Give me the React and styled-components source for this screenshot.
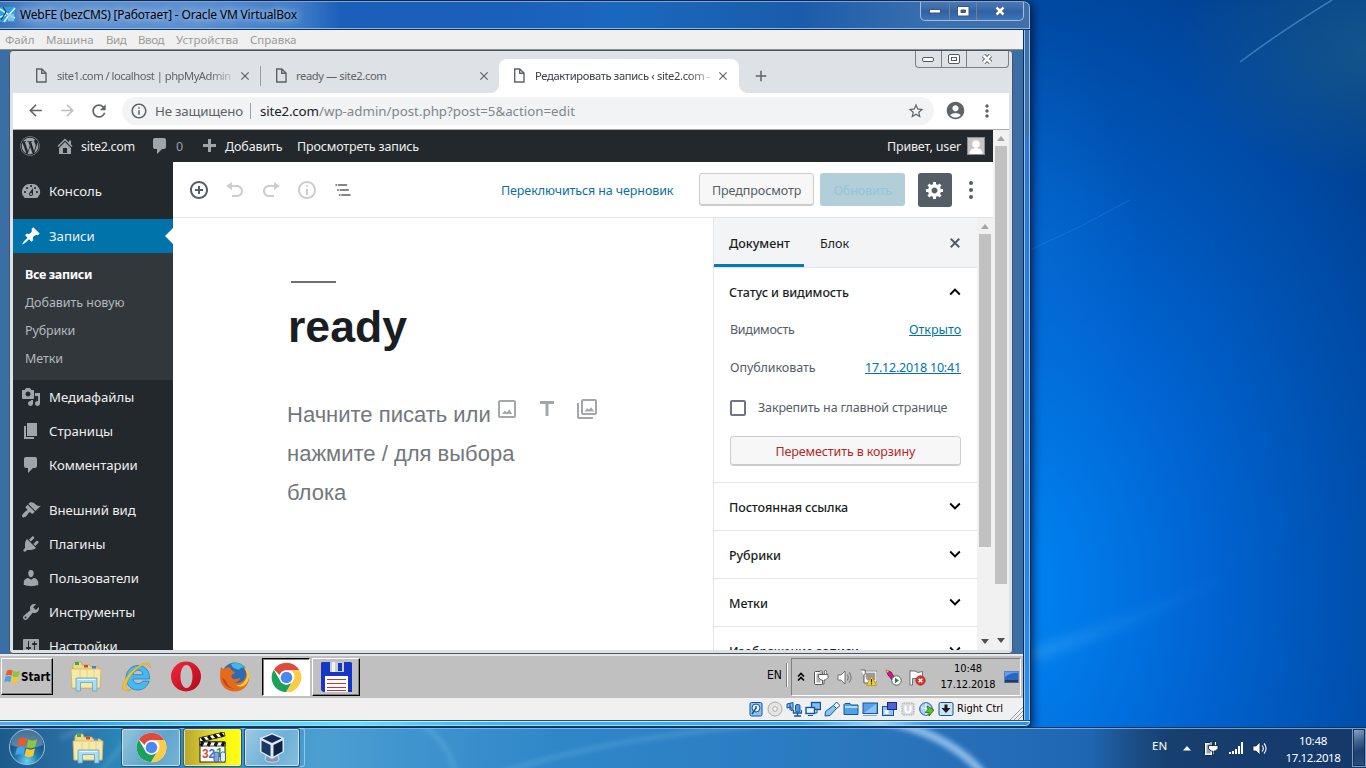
import React from "react";
import styled, { createGlobalStyle, css } from "styled-components";
import {
  MdArrowBack, MdArrowForward, MdRefresh, MdInfoOutline, MdStarBorder, MdAccountCircle,
  MdMoreVert, MdKeyboardArrowUp, MdKeyboardArrowDown, MdClose, MdAdd, MdTitle,
} from "react-icons/md";
import { FaWordpress } from "react-icons/fa";

const Globals = createGlobalStyle`
  html, body { margin: 0; padding: 0; }
  body { width: 1366px; height: 768px; overflow: hidden; background: #0058c0; }
  * { box-sizing: border-box; }
  svg { display: block; flex: none; }
`;

const ui = `"Noto Sans", "Open Sans", sans-serif`;
const tahoma = `"DejaVu Sans Condensed", "Noto Sans", sans-serif`;

const Text = styled.span`
  flex: none;
  width: ${(p) => (p.$w ? `${p.$w}px` : "auto")};
  margin-left: ${(p) => p.$gap || 0}px;
  letter-spacing: ${(p) => p.$ls || 0}px;
  font-family: ${ui};
  white-space: pre;
`;

/* ---------- desktop ---------- */
const Desktop = styled.div`
  position: relative;
  display: flex;
  flex-direction: column;
  width: 1366px;
  height: 768px;
  overflow: hidden;
  background:
    radial-gradient(ellipse 190px 130px at 1366px 50px, rgba(40, 105, 140, 0.5), transparent),
    radial-gradient(ellipse 110px 240px at 1030px 260px, rgba(10, 120, 220, 0.35), transparent),
    radial-gradient(ellipse 520px 720px at 990px 590px, #0088f6 0%, #007ae8 18%, #0064d2 42%, #0053b4 66%, #00459b 88%, #003f8b 100%);
`;
const Wallpaper = styled.svg`
  position: absolute;
  left: 0;
  top: 0;
`;

/* ---------- outer window ---------- */
const VmWindow = styled.div`
  position: relative;
  display: flex;
  flex-direction: column;
  width: 1030px;
  height: 727px;
  border-radius: 0 7px 5px 0;
  box-shadow: 1px 1px 0 #10264a, 3px 3px 10px rgba(0, 10, 50, 0.75);
  background: linear-gradient(#3f71ab 0 136px, #2c78cc 137px, #2b86e2 600px, #2f8fe8 100%);
`;
const TitleBar = styled.div`
  display: flex;
  align-items: center;
  height: 30px;
  border-top: 1px solid #10264f;
  border-bottom: 1px solid #12305c;
  border-radius: 0 7px 0 0;
  box-shadow: inset 0 1px 0 #7fa5d6, inset 0 -1px 0 #86b8ea, inset -1px 0 0 #9dbbe0;
  background: linear-gradient(90deg, #3a70b8 0, #5d8fce 40px, #5c8fd0 200px, #3f7cc8 300px, #1c5fba 340px, #1a5fb8 500px, #1a68bd 620px, #1a5cab 800px, #3a6fae 930px, #416fa8 100%);
`;
const TitleText = styled(Text)`
  font-size: 12px;
  line-height: 28px;
  color: #000;
  text-shadow: 0 0 6px #b9d3f2, 0 0 10px #a5c6ee;
`;
const CaptionButtons = styled.div`
  display: flex;
  align-self: flex-start;
  margin: 1px 6px 0 auto;
  height: 19px;
  border: 1px solid #9fbde2;
  border-top: 0;
  border-radius: 0 0 5px 5px;
  background: linear-gradient(#4a78b4, #3767a8 45%, #2f60a4 50%, #3f74b6);
`;
const CaptionButton = styled.div`
  display: flex;
  align-items: center;
  justify-content: center;
  width: ${(p) => p.$w}px;
  & + & { border-left: 1px solid ${(p) => (p.$flat ? "#7c8086" : "#a3bfe2")}; }
`;
const WindowBody = styled.div`
  display: flex;
  flex: none;
  height: 690px;
`;
const RightFrame = styled.div`
  width: 7px;
  border-left: 1px solid #0e2a55;
  border-right: 1px solid rgba(160, 205, 250, 0.85);
  box-shadow: inset 1px 0 0 rgba(165, 210, 250, 0.85);
`;
const BottomFrame = styled.div`
  height: 7px;
  border-top: 1px solid #1c5488;
  border-bottom: 1px solid #173a66;
  border-radius: 0 0 5px 0;
  box-shadow: inset 0 1px 0 #c9ecfa, inset 0 -1px 0 #a6d8f5, inset -1px 0 0 #8fc4f2;
  background: linear-gradient(90deg, #58a8ea 0, #2aa4f0 80px, #55d6fa 220px, #5fe0fb 360px, #45b5f5 480px, #3aa6f0 800px, #9cd2f6 880px, #3a97ea 930px, #2f8fe8 100%);
`;
const Client = styled.div`
  display: flex;
  flex-direction: column;
  width: 1023px;
`;
const MenuBar = styled.div`
  display: flex;
  height: 20px;
  padding-left: 5px;
  background: #f0f0f0;
  border-bottom: 1px solid #8b8b8b;
`;
const MenuItem = styled(Text)`
  font-size: 11.5px;
  line-height: 19px;
  color: #9b9b9b;
`;
const Guest = styled.div`
  display: flex;
  flex-direction: column;
  height: 648px;
  background: #3b6ea5;
`;
const StatusBar = styled.div`
  display: flex;
  align-items: center;
  gap: 3px;
  height: 22px;
  padding-left: 748px;
  background: #f0f0f0;
`;
const StatusText = styled(Text)`
  font-family: ${tahoma};
  font-size: 11px;
  line-height: 22px;
  color: #000;
`;
const Grip = styled.svg`
  margin: 8px 0 0 auto;
`;

/* ---------- browser ---------- */
const Browser = styled.div`
  display: flex;
  flex-direction: column;
  width: 1004px;
  height: 604px;
  margin-left: 9px;
  padding: 0 3px 3px;
  border: 1px solid #45566b;
  border-radius: 4px;
  background: #dee1e6;
`;
const TabStrip = styled.div`
  display: flex;
  height: 42px;
  padding-left: 21px;
`;
const Tab = styled.div`
  display: flex;
  align-items: center;
  width: ${(p) => p.$w}px;
  height: ${(p) => (p.$active ? 34 : 33)}px;
  margin-top: 8px;
  padding-left: ${(p) => p.$pad}px;
  ${(p) => p.$active && css`
    position: relative;
    padding-bottom: 1px;
    background: #fff;
    border-radius: 8px 8px 0 0;
    &::before, &::after {
      content: "";
      position: absolute;
      bottom: 0;
      width: 8px;
      height: 8px;
    }
    &::before { left: -8px; background: radial-gradient(circle at 0 0, transparent 7.5px, #fff 8px); }
    &::after { right: -8px; background: radial-gradient(circle at 100% 0, transparent 7.5px, #fff 8px); }
  `}
`;
const TabTitle = styled(Text)`
  font-size: 11.2px;
  line-height: 33px;
  color: ${(p) => (p.$active ? "#3c4043" : "#5f6368")};
  ${(p) => p.$fade && css`mask-image: linear-gradient(90deg, #000 calc(100% - 22px), rgba(0, 0, 0, 0.25));`}
`;
const TabClose = styled(MdClose)`
  margin-left: ${(p) => p.$ml}px;
`;
const TabDivider = styled.div`
  width: 1px;
  height: 20px;
  margin-top: 15px;
  background: #9a9da2;
`;
const NewTab = styled(MdAdd)`
  margin: 16px 0 0 13px;
`;
const GuestCaption = styled.div`
  display: flex;
  margin: 0 0 0 auto;
  height: 17px;
  width: 94px;
  border: 1px solid #7c8086;
  border-top: 0;
  border-radius: 0 0 4px 4px;
`;
const AddressBar = styled.div`
  display: flex;
  align-items: center;
  height: 37px;
  padding-left: 13px;
  background: #fff;
  border-bottom: 1px solid #a9abad;
  color: #5f6368;
`;
const NavIcon = styled.div`
  display: flex;
  justify-content: center;
  width: 18px;
  margin-right: 14px;
  color: ${(p) => (p.$off ? "#bcbec0" : "#5f6368")};
`;
const Omnibox = styled.div`
  display: flex;
  align-items: center;
  width: 812px;
  height: 28px;
  padding: 0 8px;
  border-radius: 14px;
  background: #f1f3f4;
`;
const OmniText = styled(Text)`
  font-size: 13.3px;
  line-height: 26px;
  color: ${(p) => p.$c};
`;
const OmniDivider = styled.div`
  width: 1px;
  height: 16px;
  margin: 0 9px 0 7px;
  background: #9aa0a6;
`;
const Viewport = styled.div`
  display: flex;
  height: 521px;
  overflow: hidden;
`;
const ScrollTrack = styled.div`
  display: flex;
  flex-direction: column;
  align-items: center;
  width: 16px;
  background: #f1f1f1;
`;
const ScrollThumb = styled.div`
  width: 12px;
  height: ${(p) => p.$h}px;
  background: #c1c1c1;
`;
const ScrollArrow = styled.div`
  width: 0;
  height: 0;
  border: 4px solid transparent;
  ${(p) => (p.$down
    ? css`margin: auto 0 7px; border-top: 5px solid #505050; border-bottom: 0;`
    : css`margin: 6px 0 5px; border-bottom: 5px solid #a3a3a3; border-top: 0;`)}
`;

/* ---------- wordpress ---------- */
const Page = styled.div`
  display: flex;
  flex-direction: column;
  width: 980px;
  background: #fff;
`;
const AdminBar = styled.div`
  display: flex;
  align-items: center;
  height: 32px;
  flex: none;
  padding-left: 7px;
  background: #23282d;
  color: #a0a5aa;
`;
const BarText = styled(Text)`
  padding-top: 2px;
  font-size: 12.5px;
  line-height: 30px;
  color: ${(p) => p.$c || "#eee"};
`;
const Avatar = styled.div`
  width: 18px;
  height: 18px;
  margin-left: 6px;
  border: 1px solid #8c8f94;
  background: #c5c5c5;
  overflow: hidden;
`;
const IconSlot = styled.div`
  display: flex;
  align-items: center;
  justify-content: center;
  width: ${(p) => p.$w || 20}px;
  margin-left: ${(p) => p.$gap || 0}px;
`;
const Columns = styled.div`
  display: flex;
  height: 489px;
`;
const SideMenu = styled.nav`
  width: 160px;
  flex: none;
  padding-top: 12px;
  background: #23282d;
  overflow: hidden;
`;
const SideItem = styled.div`
  position: relative;
  display: flex;
  align-items: center;
  height: 34px;
  margin-top: ${(p) => p.$mt || 0}px;
  padding-left: 8px;
  color: ${(p) => (p.$current ? "#fff" : "#a0a5aa")};
  background: ${(p) => (p.$current ? "#0073aa" : "transparent")};
  ${(p) => p.$current && css`
    &::after {
      content: "";
      position: absolute;
      right: 0;
      top: 9px;
      border: 8px solid transparent;
      border-left: 0;
      border-right-color: #fff;
    }
  `}
`;
const SideText = styled(Text)`
  font-size: 13.2px;
  line-height: 34px;
  color: #eee;
`;
const SubMenu = styled.div`
  display: flex;
  flex-direction: column;
  height: 127px;
  padding: 8px 0 0 12px;
  background: #32373c;
`;
const SubItem = styled(Text)`
  font-size: 12.5px;
  line-height: 28px;
  font-weight: ${(p) => (p.$on ? 700 : 400)};
  color: ${(p) => (p.$on ? "#fff" : "#b4b9be")};
`;
const Editor = styled.div`
  display: flex;
  flex-direction: column;
  width: 820px;
`;
const EditorToolbar = styled.div`
  display: flex;
  align-items: center;
  height: 56px;
  flex: none;
  padding: 1px 0 0 16px;
  border-bottom: 1px solid #e2e4e7;
`;
const ToolIcon = styled.div`
  display: flex;
  width: 20px;
  margin-right: 16px;
  color: ${(p) => (p.$off ? "#cbcdce" : "#555d66")};
`;
const DraftLink = styled(Text)`
  padding-top: 2px;
  font-size: 12.5px;
  line-height: 50px;
  color: #0b6f9f;
`;
const Button = styled.div`
  display: flex;
  justify-content: center;
  width: ${(p) => p.$w}px;
  height: 33px;
  border-radius: 3px;
  ${(p) => (p.$primary
    ? css`margin-left: 6px; background: #b2ced9;`
    : css`margin-left: 25px; background: #f7f7f7; border: 1px solid #ccc; box-shadow: inset 0 -1px 0 #ccc;`)}
`;
const ButtonText = styled(Text)`
  font-size: 12.5px;
  line-height: ${(p) => (p.$primary ? 35 : 33)}px;
  color: ${(p) => (p.$primary ? "#93c5d9" : "#555d66")};
`;
const GearButton = styled.div`
  display: flex;
  align-items: center;
  justify-content: center;
  width: 34px;
  height: 34px;
  margin-left: 13px;
  border-radius: 3px;
  background: #555d66;
  color: #fff;
`;
const Workspace = styled.div`
  display: flex;
  height: 433px;
`;
const Canvas = styled.div`
  width: 540px;
  padding: 63px 0 0 114px;
`;
const TitleRule = styled.div`
  width: 45px;
  height: 2px;
  margin-left: 4px;
  background: #6f6f70;
`;
const PostTitle = styled.h1`
  margin: 17px 0 0 1px;
  font: 700 44.6px/54px "Liberation Sans", Arial, sans-serif;
  color: #191e23;
`;
const Prompt = styled.div`
  display: flex;
  margin-top: 41px;
`;
const PromptText = styled.p`
  width: 208px;
  margin: 0;
  white-space: pre;
  font: 22px/39px "Liberation Sans", Arial, sans-serif;
  color: #72777c;
`;
const BlockHints = styled.div`
  display: flex;
  gap: 16px;
  padding-top: 2px;
  color: #a3a7ab;
`;
const Inspector = styled.aside`
  width: 264px;
  border-left: 1px solid #e2e4e7;
  overflow: hidden;
`;
const InspectorTabs = styled.div`
  display: flex;
  height: 50px;
  background: #f3f4f5;
  border-bottom: 1px solid #e2e4e7;
`;
const InspectorTab = styled.div`
  width: 90px;
  height: 49px;
  padding-left: ${(p) => (p.$on ? 15 : 16)}px;
  ${(p) => p.$on && css`box-shadow: inset 0 -3px 0 #007cba;`}
`;
const PanelText = styled(Text)`
  display: block;
  padding-top: ${(p) => p.$drop || 0}px;
  font-size: 12.5px;
  line-height: ${(p) => p.$lh || 20}px;
  font-weight: ${(p) => (p.$strong ? 500 : 400)};
  color: ${(p) => p.$c || "#191e23"};
  text-decoration: ${(p) => (p.$link ? "underline" : "none")};
`;
const InspectorClose = styled.div`
  margin: 15px 0 0 51px;
  color: #555d66;
`;
const StatusPanel = styled.section`
  height: 215px;
  border-bottom: 1px solid #e2e4e7;
`;
const PanelHead = styled.div`
  display: flex;
  align-items: center;
  justify-content: space-between;
  height: ${(p) => p.$h}px;
  padding: 0 11px 0 15px;
  ${(p) => p.$line && css`border-bottom: 1px solid #e2e4e7;`}
`;
const PanelRow = styled.div`
  display: flex;
  align-items: center;
  justify-content: space-between;
  height: ${(p) => p.$h}px;
  padding: 2px 16px 0;
`;
const StickyRow = styled.div`
  display: flex;
  align-items: center;
  height: 30px;
  padding-left: 16px;
`;
const Checkbox = styled.div`
  width: 16px;
  height: 16px;
  margin-right: 12px;
  border: 2px solid #6c7781;
  border-radius: 2px;
`;
const TrashButton = styled.div`
  display: flex;
  justify-content: center;
  width: 231px;
  height: 30px;
  margin: 13px 0 0 16px;
  border: 1px solid #ccc;
  border-radius: 3px;
  box-shadow: inset 0 -1px 0 #ccc;
  background: #f7f7f7;
`;

/* ---------- guest task bar ---------- */
const GuestTaskbar = styled.div`
  display: flex;
  height: 44px;
  margin-top: auto;
  padding: 4px 2px 0 1px;
  border-top: 2px solid #e8e8e8;
  background: #c0c0c0;
`;
const raised = css`
  border: 1px solid;
  border-color: #fff #000 #000 #fff;
  box-shadow: inset -1px -1px 0 #808080;
`;
const StartButton = styled.div`
  display: flex;
  align-items: center;
  width: 52px;
  height: 37px;
  padding-left: 2px;
  margin-top: -2px;
  ${raised}
`;
const StartText = styled(Text)`
  font: 700 11.5px/34px "DejaVu Sans Condensed", sans-serif;
  color: #000;
`;
const Launchers = styled.div`
  display: flex;
  align-items: center;
  gap: 18px;
  height: 37px;
  margin: -2px 0 0 17px;
`;
const TaskButton = styled.div`
  display: flex;
  align-items: center;
  justify-content: center;
  width: 48px;
  height: 38px;
  margin: -2px 0 0 ${(p) => p.$gap}px;
  ${(p) => (p.$pressed ? css`border: 1px solid; border-color: #000 #fff #fff #000; box-shadow: inset 1px 1px 0 #808080; background: #fff;` : raised)}
`;
const LangText = styled(Text)`
  font-family: ${tahoma};
  font-size: 12px;
  line-height: 30px;
  color: #000;
`;
const TraySeparator = styled.div`
  width: 2px;
  height: 24px;
  margin: 3px 0 0 4px;
  border-left: 1px solid #808080;
  border-right: 1px solid #fff;
`;
const GuestTray = styled.div`
  display: flex;
  align-items: center;
  width: 230px;
  height: 38px;
  margin: -2px 0 0 3px;
  padding-left: 5px;
  border: 1px solid;
  border-color: #808080 #fff #fff #808080;
`;
const TrayIcons = styled.div`
  display: flex;
  align-items: center;
  gap: 7.5px;
  margin-left: 8px;
`;
const Clock = styled.div`
  display: flex;
  flex-direction: column;
  align-items: center;
  width: 60px;
`;
const ClockText = styled(Text)`
  font-family: ${tahoma};
  font-size: 11px;
  line-height: 16px;
  color: #000;
`;

/* ---------- host task bar ---------- */
const HostTaskbar = styled.div`
  position: relative;
  display: flex;
  height: 41px;
  border-top: 1px solid #10335e;
  box-shadow: inset 0 1px 0 rgba(150, 200, 240, 0.7);
  background: linear-gradient(90deg, #1d5a8c 0, #2a6fa3 70px, #2a87b8 120px, #3a95c8 240px, #4b9fd0 320px, #3f93ce 420px, #2f87c8 560px, #2b7cc2 780px, #2a74bb 900px, #1f66b2 1090px, #1c4f88 1130px, #173f70 1170px, #153a6c 1300px, #15396a 100%);
`;
const Orb = styled.div`
  margin: 0 0 0 8px;
`;
const HostApp = styled.div`
  display: flex;
  align-items: center;
  justify-content: center;
  width: ${(p) => p.$w}px;
  height: 39px;
  margin-left: ${(p) => p.$gap}px;
  border: 1px solid rgba(20, 50, 80, 0.75);
  border-radius: 3px;
  box-shadow: inset 0 0 0 1px rgba(220, 240, 255, 0.75);
  background: ${(p) => (p.$alert
    ? "linear-gradient(90deg, #b9a52c, #d8cf2c 40%, #f6f615 75%, #ffff10)"
    : "linear-gradient(120deg, rgba(255, 255, 255, 0.5), rgba(255, 255, 255, 0.22) 60%, rgba(255, 255, 255, 0.35))")};
`;
const StackEdge = styled.div`
  width: 5px;
  height: 39px;
  border: 1px solid rgba(200, 230, 250, 0.55);
  border-left: 0;
  border-radius: 0 3px 3px 0;
`;
const HostTray = styled.div`
  display: flex;
  align-items: center;
  width: 200px;
  height: 41px;
  margin-left: auto;
`;
const HostText = styled(Text)`
  font-size: 11.5px;
  line-height: 17px;
  color: #fff;
`;
const HostLang = styled(HostText)`
  padding-bottom: 6px;
`;
const ShowDesktop = styled.div`
  width: 14px;
  height: 39px;
  border: 1px solid #7d9cc0;
  box-shadow: inset 0 0 0 1px #17315a;
  background: linear-gradient(160deg, #8fa9c6, #3f628e 35%, #1d3f6f 60%, #2a4f80);
`;

/* ---------- icons ---------- */
const dash = {
  home: "M16 8.5l1.53 1.53-1.06 1.06L10 4.6l-6.47 6.49-1.06-1.06L10 2.5l4 4v-2h2v4zm-6-2.46l6 5.99V18H4v-5.97zM12 17v-5H8v5h4z",
  comments: "M5 2h9c1.1 0 2 .9 2 2v7c0 1.1-.9 2-2 2h-2l-5 5v-5H5c-1.1 0-2-.9-2-2V4c0-1.1.9-2 2-2z",
  plus: "M17 8v3h-5v5H9v-5H4V8h5V3h3v5h5z",
  dashboard: "M3.76 17h12.48A7.998 7.998 0 0 0 10 3a7.998 7.998 0 0 0-6.24 14zM10 4c.55 0 1 .45 1 1s-.45 1-1 1-1-.45-1-1 .45-1 1-1zM6 6c.55 0 1 .45 1 1s-.45 1-1 1-1-.45-1-1 .45-1 1-1zm8 0c.55 0 1 .45 1 1s-.45 1-1 1-1-.45-1-1 .45-1 1-1zm-5.37 5.55L12 7v6c0 1.1-.9 2-2 2s-2-.9-2-2c0-.57.24-1.08.63-1.45zM4 10c.55 0 1 .45 1 1s-.45 1-1 1-1-.45-1-1 .45-1 1-1zm12 0c.55 0 1 .45 1 1s-.45 1-1 1-1-.45-1-1 .45-1 1-1zm-5 3c0-.55-.45-1-1-1s-1 .45-1 1 .45 1 1 1 1-.45 1-1z",
  post: "M10.44 3.02l1.82-1.82 6.36 6.35-1.83 1.82c-1.05-.68-2.48-.57-3.41.36l-.75.75c-.92.93-1.04 2.35-.35 3.41l-1.83 1.82-2.41-2.41-2.8 2.79c-.42.42-3.38 2.71-3.8 2.29s1.86-3.39 2.28-3.81l2.79-2.79L4.1 9.36l1.83-1.82c1.05.69 2.48.57 3.4-.36l.75-.75c.93-.92 1.05-2.35.36-3.41z",
  media: "M13 11V4c0-.55-.45-1-1-1h-1.67L9 1H5L3.67 3H2c-.55 0-1 .45-1 1v7c0 .55.45 1 1 1h10c.55 0 1-.45 1-1zM7 4.5c1.38 0 2.5 1.12 2.5 2.5S8.38 9.5 7 9.5 4.5 8.38 4.5 7 5.62 4.5 7 4.5zM14 6h5v10.5c0 1.38-1.12 2.5-2.5 2.5S14 17.88 14 16.5s1.12-2.5 2.5-2.5c.17 0 .34.02.5.05V9h-3V6zm-4 8.05V13h2v3.5c0 1.38-1.12 2.5-2.5 2.5S7 17.88 7 16.5 8.12 14 9.5 14c.17 0 .34.02.5.05z",
  page: "M6 15V2h10v13H6zm-1 1h8v2H3V5h2v11z",
  appearance: "M14.48 11.06L7.41 3.99l1.5-1.5c.5-.56 2.3-.47 3.51.32 1.21.8 1.43 1.28 2.91 2.1 1.18.64 2.45 1.26 4.45.85zm-.71.71L6.7 4.7 4.93 6.47c-.39.39-.39 1.02 0 1.41l1.06 1.06c.39.39.39 1.03 0 1.42-.6.6-1.43 1.11-2.21 1.69-.35.26-.7.53-1.01.84C1.43 14.23.4 16.08 1.4 17.07c.99 1 2.84-.03 4.18-1.36.31-.31.58-.66.85-1.02.57-.78 1.08-1.61 1.69-2.21.39-.39 1.02-.39 1.41 0l1.06 1.06c.39.39 1.02.39 1.41 0z",
  plugins: "M13.11 4.36L9.87 7.6 8 5.73l3.24-3.24c.35-.34 1.05-.2 1.56.32.52.51.66 1.21.31 1.55zm-8 1.77l.91-1.12 9.01 9.01-1.19.84c-.71.71-2.63 1.16-3.82 1.16H6.14L4.9 17.26c-.59.59-1.54.59-2.12 0-.59-.58-.59-1.53 0-2.12l1.24-1.24v-3.88c0-1.13.4-3.19 1.09-3.89zm7.26 3.97l3.24-3.24c.34-.35 1.04-.21 1.55.31.52.51.66 1.21.31 1.55l-3.24 3.25z",
  users: "M10 9.25c-2.27 0-2.73-3.44-2.73-3.44C7 4.02 7.82 2 9.97 2c2.16 0 2.98 2.02 2.71 3.81 0 0-.41 3.44-2.68 3.44zm0 2.57L12.72 10c2.39 0 4.52 2.33 4.52 4.53v2.49s-3.65 1.13-7.24 1.13c-3.65 0-7.24-1.13-7.24-1.13v-2.49c0-2.25 1.94-4.48 4.47-4.48z",
  tools: "M16.68 9.77c-1.34 1.34-3.3 1.67-4.95.99l-5.41 6.52c-.99.99-2.59.99-3.58 0s-.99-2.59 0-3.57l6.52-5.42c-.68-1.65-.35-3.61.99-4.95 1.28-1.28 3.12-1.62 4.72-1.06l-2.89 2.89 2.82 2.82 2.86-2.87c.53 1.58.18 3.39-1.08 4.65zM3.81 16.21c.4.39 1.04.39 1.43 0 .4-.4.4-1.04 0-1.43-.39-.4-1.03-.4-1.43 0-.39.39-.39 1.03 0 1.43z",
  settings: "M18 16V4c0-.55-.45-1-1-1H3c-.55 0-1 .45-1 1v12c0 .55.45 1 1 1h14c.55 0 1-.45 1-1zM8 11h1c.55 0 1 .45 1 1s-.45 1-1 1H8v1.5c0 .28-.22.5-.5.5s-.5-.22-.5-.5V13H6c-.55 0-1-.45-1-1s.45-1 1-1h1V5.5c0-.28.22-.5.5-.5s.5.22.5.5V11zm5-2h-1c-.55 0-1-.45-1-1s.45-1 1-1h1V5.5c0-.28.22-.5.5-.5s.5.22.5.5V7h1c.55 0 1 .45 1 1s-.45 1-1 1h-1v5.5c0 .28-.22.5-.5.5s-.5-.22-.5-.5V9z",
  gear: "M18 12h-2.18c-.17.7-.44 1.35-.81 1.93l1.54 1.54-2.1 2.1-1.54-1.54c-.58.36-1.23.63-1.91.79V19H8v-2.18c-.68-.16-1.33-.43-1.91-.79l-1.54 1.54-2.12-2.12 1.54-1.54c-.36-.58-.63-1.23-.79-1.91H1V9.03h2.17c.16-.7.44-1.35.8-1.94L2.43 5.55l2.1-2.1 1.54 1.54c.58-.37 1.24-.64 1.93-.81V2h3v2.18c.68.16 1.33.43 1.91.79l1.54-1.54 2.12 2.12-1.54 1.54c.36.59.64 1.24.8 1.94H18V12zm-8.5 1.5c1.66 0 3-1.34 3-3s-1.34-3-3-3-3 1.34-3 3 1.34 3 3 3z",
  close: "M14.95 6.46L11.41 10l3.54 3.54-1.41 1.41L10 11.42l-3.53 3.53-1.42-1.42L8.58 10 5.05 6.47l1.42-1.42L10 8.58l3.54-3.53z",
  insert: "M10 1c-5 0-9 4-9 9s4 9 9 9 9-4 9-9-4-9-9-9zm0 16c-3.9 0-7-3.1-7-7s3.1-7 7-7 7 3.1 7 7-3.1 7-7 7zm1-11H9v3H6v2h3v3h2v-3h3V9h-3V6z",
  undo: "M12 5H7V2L1 6l6 4V7h5c2.2 0 4 1.8 4 4s-1.8 4-4 4H7v2h5c3.3 0 6-2.7 6-6s-2.7-6-6-6z",
  redo: "M8 5h5V2l6 4-6 4V7H8c-2.2 0-4 1.8-4 4s1.8 4 4 4h5v2H8c-3.3 0-6-2.7-6-6s2.7-6 6-6z",
  info: "M9 15h2V9H9v6zm1-10c-.5 0-1 .5-1 1s.5 1 1 1 1-.5 1-1-.5-1-1-1zm0-4c-5 0-9 4-9 9s4 9 9 9 9-4 9-9-4-9-9-9zm0 16c-3.9 0-7-3.1-7-7s3.1-7 7-7 7 3.1 7 7-3.1 7-7 7z",
};
const Dash = ({ name, size = 20 }) => (
  <svg width={size} height={size} viewBox="0 0 20 20" fill="currentColor"><path d={dash[name]} /></svg>
);
const ListIcon = () => (
  <svg width="20" height="20" viewBox="0 0 24 24" fill="currentColor">
    <path d="M5 5H3v2h2V5zm3 8h11v-2H8v2zm9-8H6v2h11V5zM7 11H5v2h2v-2zm0 8h2v-2H7v2zm3-2v2h11v-2H10z" />
  </svg>
);
const FileIcon = () => (
  <svg width="12" height="15" viewBox="0 0 12 15" fill="none" stroke="#5f6368" strokeWidth="1.4">
    <path d="M1.7 1h5L11 5V14H1.7z M6.7 1v4.200H11" />
  </svg>
);
const ImageIcon = () => (
  <svg width="24" height="24" viewBox="0 0 24 24" fill="currentColor">
    <path d="M19 5v14H5V5h14m0-2H5c-1.100 0-2 .9-2 2v14c0 1.100.9 2 2 2h14c1.100 0 2-.9 2-2V5c0-1.100-.9-2-2-2z" />
    <path d="M14.300 12.500l-2.600 3-1.800-2L7 17h10.200z" />
  </svg>
);
const GalleryIcon = () => (
  <svg width="24" height="24" viewBox="0 0 24 24" fill="currentColor">
    <path d="M20 4v12H8V4h12m0-2H8c-1.100 0-2 .9-2 2v12c0 1.100.9 2 2 2h12c1.100 0 2-.9 2-2V4c0-1.100-.9-2-2-2z" />
    <path d="M16.200 10.200l-2.300 2.600-1.600-1.800L9.500 14.500h9.600z M2 6v14c0 1.100.9 2 2 2h14v-2H4V6H2z" />
  </svg>
);
const VmIcon = () => (
  <svg width="16" height="16" viewBox="0 0 16 16">
    <rect x="-2" width="17" height="15" fill="#2b9fe0" />
    <path d="M0 2L9 8 15 1M4 15l5-7 6 3M0 10l6-2" stroke="#d8f2ff" strokeWidth="1.6" fill="none" />
    <path d="M3 0l3 5-5 8" stroke="#12446e" strokeWidth="1.2" fill="none" />
    <rect x="8" y="7" width="6" height="7" fill="#9cc7e6" opacity=".8" />
  </svg>
);
const ChromeIcon = () => (
  <svg width="31" height="31" viewBox="0 0 48 48">
    <circle cx="24" cy="24" r="23" fill="#fff" />
    <path d="M24 1a23 23 0 0 1 20 11.7H24a11.3 11.3 0 0 0-10.6 7.5L4.6 11.5A23 23 0 0 1 24 1z" fill="#de4b3c" />
    <path d="M44 12.7A23 23 0 0 1 23 47l10.400-17.200A11 11 0 0 0 31 13z" fill="#fdcc45" />
    <path d="M4.300 12A23 23 0 0 0 23 47l9.500-16.200a11 11 0 0 1-18.600-2.300z" fill="#1ba15c" />
    <circle cx="24" cy="24" r="11" fill="#fff" />
    <circle cx="24" cy="24" r="9" fill="#4b87f0" />
  </svg>
);
const FolderIcon = () => (
  <svg width="33" height="31" viewBox="0 0 33 31">
    <path d="M3 3l2-2h6l1 3h8l1 2h7l2 2v19H2z" fill="#f0d98a" stroke="#c7a545" strokeWidth=".8" />
    <path d="M1 8h30l-1 19H2z" fill="#f7e9a9" stroke="#d3b55a" strokeWidth=".8" />
    <rect x="5" y="1" width="4" height="3" fill="#35a853" /><rect x="14" y="4" width="4" height="2.5" fill="#d9412f" /><rect x="22" y="5" width="4" height="2.5" fill="#3a86d8" />
    <path d="M10 9v17M17 9v8M24 9v17" stroke="#e6cf80" />
    <path d="M6 17h21v13h-4.500v-8.500h-12V30H6z" fill="#a8dcf5" stroke="#5fa8d2" strokeWidth=".9" opacity=".95" />
    <path d="M7.500 18.500h18" stroke="#e9f9ff" />
  </svg>
);
const IeIcon = () => (
  <svg width="32" height="32" viewBox="0 0 32 32">
    <path fillRule="evenodd" d="M28.500 18H12c.3 3 2.300 4.600 5 4.600 2.200 0 3.700-.9 4.700-2.500h6.500C26.500 25.500 22.300 29 16.900 29 10 29 5 24 5 17 5 10 10.200 4.500 17 4.500c7.200 0 12 5.500 11.500 13.500zM12 13.700h10c-.4-2.700-2.400-4.500-5-4.500-2.600 0-4.500 1.800-5 4.500z" fill="#45b8f0" stroke="#1f7dc0" strokeWidth=".8" />
    <path d="M29.500 7C30 2 25.500.5 19 4 11 8 3.500 17 2 24c-1 5 2.500 7.500 8.500 4.500C6.500 29.500 4 28 5 24 7 17 13 9 20 5.200c4.500-2.400 8-2.200 9.500 1.800z" fill="#f4c531" stroke="#d29b12" strokeWidth=".5" />
  </svg>
);
const OperaIcon = () => (
  <svg width="30" height="31" viewBox="0 0 30 31">
    <defs><linearGradient id="opera" x2="1" y2="1"><stop offset="0" stopColor="#f5263a" /><stop offset="1" stopColor="#b00a1c" /></linearGradient></defs>
    <path fillRule="evenodd" d="M15 .5a15 15 0 1 0 0 30 15 15 0 1 0 0-30zM15.500 4c3.600 0 6 4.900 6 11.500S19.100 27 15.500 27s-6-4.900-6-11.500S11.900 4 15.500 4z" fill="url(#opera)" />
  </svg>
);
const FirefoxIcon = () => (
  <svg width="31" height="31" viewBox="0 0 31 31">
    <circle cx="16" cy="14.500" r="13" fill="#2a6cb5" />
    <path d="M12 3c5-2 11-1 14 4-3-1-5 0-6 2-3-1-7-2-8-6z" fill="#46b6e6" />
    <path d="M2 6c1 1 2 1.500 3 2 2-1.500 4-2 6-1.500 1 1 1 2.500 3 3.500 1 .6 2 .8 2 1.600-.5 1.300-3 1.500-3.500 3-.4 1.500.5 3 2.500 3.500 2.500.5 4-1.500 6.500-.8-1 2.700-3.500 4-6.500 4 6 2 11-1 12-7 .3-2.500-.5-5-1.500-6.500 3 2.200 5 5.500 4.700 9.500C29.500 25 23.500 30.500 16 30.500 7.500 30.500 1 24.500 1 15.500 1 12 1.300 9 2 6z" fill="#e66a1c" />
    <path d="M25.500 8c3.500 4 3 9.500-.5 13-2 2.300-5 3.500-8 3.300 5 3.500 12 0 13-8 .5-3.500-1-7.500-4.500-10.300z" fill="#fbc93a" />
    <path d="M3 16c1 7 6 12 13 12-5-1-8-4-9-8z" fill="#c8401a" />
  </svg>
);
const FloppyIcon = () => (
  <svg width="31" height="31" viewBox="0 0 31 31">
    <path d="M1 0h29l1 1v29H2l-2-2V1z" fill="#1637c4" />
    <path d="M9 0h14v10H9z" fill="#c9ccd2" /><path d="M17 1h4v8h-4z" fill="#1637c4" /><path d="M11 0h3v10h-3z" fill="#f4f4f4" />
    <path d="M4 14h23v16H4z" fill="#fff" />
    <path d="M6 17.500h19M6 21.500h19M6 25.500h19M6 28.500h19" stroke="#c8323a" />
  </svg>
);
const flagParts = [
  ["#ea5a2a", "M2.3 2.300C4 1.300 6 1.300 7.700 2.300L6.600 7.300C5 6.300 3 6.300 1.100 7.300z"],
  ["#8cc63e", "M8.500 2.700c1.900 1 3.900 1 5.900 0l-1.200 5c-1.900 1-3.900 1-5.800 0z"],
  ["#45a3e8", "M.9 8.300c1.800-1 3.700-1 5.500 0l-1.100 5c-1.800-1-3.700-1-5.600 0z"],
  ["#fbc52e", "M7.200 8.700c1.900 1 3.900 1 5.800 0l-1.200 5c-1.900 1-3.900 1-5.700 0z"],
];
const WinFlag = ({ size }) => (
  <svg width={size} height={size} viewBox="-.5 0 16 16">{flagParts.map(([c, d]) => <path key={c} d={d} fill={c} />)}</svg>
);
const OrbIcon = () => (
  <svg width="38" height="38" viewBox="0 0 38 38">
    <defs><radialGradient id="orb" cx=".5" cy=".9" r=".85"><stop offset="0" stopColor="#5fd5f7" /><stop offset=".4" stopColor="#2272a8" /><stop offset="1" stopColor="#123a62" /></radialGradient></defs>
    <circle cx="19" cy="19" r="17.500" fill="url(#orb)" stroke="#9cc4de" strokeWidth="1" />
    <path d="M3 17a16 16 0 0 1 32 0c-9 4-23 4-32 0z" fill="#bcd9ec" opacity=".35" />
    <g transform="translate(7.500 7.500) scale(1.500)">{flagParts.map(([c, d]) => <path key={c} d={d} fill={c} />)}</g>
  </svg>
);
const ClapperText = styled.text`
  font: 700 12px "Liberation Sans", sans-serif;
`;
const ClapperIcon = () => (
  <svg width="32" height="32" viewBox="0 0 32 32">
    <path d="M2 6L27 0l1 4L3 10z" fill="#fff" stroke="#111" strokeWidth=".8" />
    <path d="M5 5.500l3 3.500M11 4l3 3.500M17 2.500l3 3.500M23 1l3 3.500" stroke="#111" strokeWidth="3" />
    <rect x="3" y="10" width="25" height="20" fill="#fff" stroke="#222" />
    <path d="M3 10h25v4H3z" fill="#fff" stroke="#111" strokeWidth=".8" />
    <path d="M6 10l-2 4M13 10l-2 4M20 10l-2 4M27 10l-2 4" stroke="#111" strokeWidth="3" />
    <ClapperText x="5" y="26" fill="#d4502c">3</ClapperText><ClapperText x="11.500" y="26" fill="#3a6fd0">2</ClapperText><ClapperText x="19" y="25" fill="#2c9a3e">1</ClapperText>
    <rect x="17" y="20" width="5" height="10" rx="2" fill="#7fa6e0" stroke="#2b4c96" strokeWidth=".8" /><rect x="23.500" y="20" width="5" height="10" rx="2" fill="#e4ecf9" stroke="#2b4c96" strokeWidth=".8" />
  </svg>
);
const VboxIcon = () => (
  <svg width="28" height="32" viewBox="0 0 28 32">
    <path d="M8 23l6 3 6-3 1 5c-2 3-12 3-14 0z" fill="#8a97ad" stroke="#d8e4f2" strokeWidth=".8" />
    <path d="M14 1l12 5v14l-12 7L2 20V6z" fill="#dbe7f5" />
    <path d="M14 2.500l9.500 4L14 11 4.500 6.500z" fill="#132d52" /><path d="M3.500 8.500l9 4.500v11.500l-9-5z" fill="#1a3a66" /><path d="M24.500 8.500l-9 4.500v11.500l9-5z" fill="#0d2344" />
  </svg>
);
const Speaker = ({ edge, wave = "#fff" }) => (
  <svg width="16" height="15" viewBox="0 0 16 15">
    <path d="M1 5h3l4-4v13L4 10H1z" fill="#fff" stroke={edge} strokeWidth=".8" />
    <path d="M10 4.500a4.500 4.500 0 0 1 0 6M12 2.500a7 7 0 0 1 0 10" fill="none" stroke={wave} strokeWidth="1.100" />
  </svg>
);
const PlugIcon = ({ edge }) => (
  <svg width="16" height="17" viewBox="0 0 16 17">
    <rect x="1.500" y="2.500" width="8" height="13" rx="1" fill="#fff" stroke={edge} />
    <rect x="3.500" y="4.500" width="4" height="9" fill={edge} opacity=".45" />
    <path d="M8 1.500v4M12.500 1.500v4" stroke={edge} strokeWidth="2.400" /><path d="M8 2v4M12.500 2v4" stroke="#fff" strokeWidth="1.200" />
    <path d="M5.500 5.500h9.500v3l-2.500 2.500h-1.500v4H9.500v-4H8L5.500 8.500z" fill="#fff" stroke={edge} strokeWidth=".9" />
  </svg>
);
const NetIcon = () => (
  <svg width="17" height="17" viewBox="0 0 17 17">
    <rect x="5" y="3" width="11" height="9" fill="#8e8e8e" stroke="#555" strokeWidth="2.400" /><rect x="5" y="3" width="11" height="9" fill="#9a9a9a" stroke="#fff" strokeWidth="1.300" />
    <path d="M.8 1h4.400v4L4 6.500V14h5" fill="#fff" stroke="#555" strokeWidth=".9" />
    <path d="M11.500 7l5 9.500h-10z" fill="#f7d51d" stroke="#a88500" strokeWidth=".6" /><path d="M11.500 10v3.500M11.500 14.300v1.200" stroke="#222" strokeWidth="1.200" />
  </svg>
);
const RocketIcon = () => (
  <svg width="17" height="17" viewBox="0 0 17 17">
    <path d="M1 1l5 2 5 8-3 1-5-6z" fill="#d9148b" stroke="#62113f" strokeWidth=".8" /><path d="M1 1l3 1-2 2z" fill="#f5d824" />
    <circle cx="11.500" cy="11.500" r="4.700" fill="#fff" stroke="#444" strokeWidth=".8" /><path d="M10 8.800v5.400l4-2.700z" fill="#168a2c" />
  </svg>
);
const FlagIcon = () => (
  <svg width="17" height="17" viewBox="0 0 17 17">
    <path d="M1 1.500v14.500h2.500V9.500h10v-7L9 3.500 6 2H1z" fill="#fff" stroke="#666" strokeWidth=".9" />
    <circle cx="11.500" cy="11.500" r="4.700" fill="#d9332a" stroke="#8d1610" strokeWidth=".6" /><path d="M9.700 9.700l3.600 3.600M13.300 9.700l-3.600 3.600" stroke="#fff" strokeWidth="1.500" />
  </svg>
);
const MiniDesktop = () => (
  <svg width="15" height="13" viewBox="0 0 15 13">
    <rect x=".5" y=".5" width="14" height="11" fill="#2a66c4" stroke="#5a82b8" /><path d="M1 6q7-5 13-4V1H1z" fill="#5fa0ea" /><rect x="1" y="9" width="13" height="2.500" fill="#263a58" />
  </svg>
);
const SignalIcon = () => (
  <svg width="15" height="13" viewBox="0 0 15 13" fill="#fff">
    <path d="M0 10h2v2H0zM3 9h2v3H3zM6 7h2v5H6zM9 4h2v8H9zM12 0h2v12h-2z" />
  </svg>
);
const CloseGlyph = ({ edge }) => (
  <svg width="13" height="11" viewBox="0 0 13 11"><path d="M2.500 1.500l7 7M9.500 1.500l-7 7" stroke={edge} strokeWidth="4.500" /><path d="M2.500 1.500l7 7M9.500 1.500l-7 7" stroke="#fff" strokeWidth="2.600" /></svg>
);
const s = { stroke: "#14549c", strokeWidth: 1 };
const StatusIcon = ({ children }) => <svg width="16" height="16" viewBox="0 0 16 16">{children}</svg>;
const StatusIcons = () => (
  <>
    <StatusIcon><rect x="2" y="1.500" width="12" height="13.500" rx="1.500" fill="#8cc4f2" {...s} /><circle cx="8" cy="7" r="4" fill="#e9f5fd" {...s} /><path d="M8 7l-4 6M8 5v3" stroke="#14549c" strokeWidth="1.500" /></StatusIcon>
    <StatusIcon><circle cx="8" cy="8" r="7" fill="#e4e4e4" stroke="#a9a9a9" /><circle cx="8" cy="8" r="2.300" fill="#f8f8f8" stroke="#a9a9a9" /></StatusIcon>
    <StatusIcon><path d="M1 3l6-1.500V9L5 9.500V6L1 7zM4 2.500V9" fill="#7fbdf2" {...s} /><rect x="9.500" y="3.500" width="4.500" height="7.500" rx="1.500" fill="#4f9ae0" {...s} /><path d="M7.500 9v3h8V9M11.500 12v3M8 15h7" fill="none" {...s} strokeWidth="1.400" /></StatusIcon>
    <StatusIcon><rect x="6.500" y="1.500" width="9" height="7" fill="#7fbdf2" {...s} strokeWidth="1.400" /><rect x="1" y="6.500" width="8.500" height="6" fill="#e8f4fd" {...s} strokeWidth="1.400" /><path d="M3 14.500h5M12 9v3h-2" fill="none" {...s} /></StatusIcon>
    <StatusIcon><path d="M10 4l3 3-7 7.500-5 .5.500-4.500z" fill="#8cc4f2" {...s} /><path d="M9.500 4.500l3-3.500 3.500 3.500-3.500 3z" fill="#fff" {...s} /></StatusIcon>
    <StatusIcon><path d="M1 13.500V3.500l1-1h5l1 1.500h7v9.500z" fill="#4fa3ea" {...s} /><path d="M2 6h12.500" stroke="#d5ecfc" strokeWidth="1.500" /></StatusIcon>
    <StatusIcon><rect x="1" y="2" width="14.500" height="10.500" fill="#54a0ea" {...s} /><path d="M2 12L14 3v9z" fill="#8cc4f6" /><path d="M1 14.500h14" stroke="#8aa5c4" /></StatusIcon>
    <StatusIcon><rect x="1.500" y="5.500" width="11" height="9" fill="#8cc4f2" {...s} /><rect x="6.500" y="1.500" width="9" height="7" fill="#4d62d4" stroke="#1d2a80" /><rect x="3.500" y="9" width="4" height="4" fill="#fff" /></StatusIcon>
    <StatusIcon><rect x="2" y="2" width="12" height="12" rx="1.500" fill="#dadada" stroke="#a5a5a5" strokeDasharray="1.500 1" /><path d="M5.500 4.500V9a2.500 2.500 0 0 0 5 0V4.500" fill="none" stroke="#fff" strokeWidth="2" /></StatusIcon>
    <StatusIcon><circle cx="7" cy="8" r="6.300" fill="#a9d3f5" {...s} /><path d="M7 2v12M2 6c3 2 6 2 9 0" stroke="#fff" fill="none" /><path d="M8 5l7 4-5 6v-3.500H6l3-3z" fill="#5ec22c" stroke="#2a7c10" strokeWidth=".9" /></StatusIcon>
    <StatusIcon><rect x="1" y="1.500" width="14" height="13" rx="1.500" fill="#cde4f8" {...s} /><path d="M6.500 3.500h3V7h3L8 12 3.500 7h3z" fill="#1c1c1c" /></StatusIcon>
  </>
);
const AvatarArt = () => (
  <svg width="16" height="16" viewBox="0 0 16 16" fill="#fff"><circle cx="8" cy="6" r="3.800" /><path d="M1.500 16c0-4 3-6 6.500-6s6.500 2 6.500 6z" /></svg>
);

/* ---------- page ---------- */
const menu = [
  ["Файл", 29, 0, -0.1], ["Машина", 48, 12, 0], ["Вид", 20, 12, -0.4],
  ["Ввод", 26, 12, -0.4], ["Устройства", 62, 12, 0], ["Справка", 46, 12, 0],
];
const subItems = [["Все записи", 67, -0.37], ["Добавить новую", 100, -0.04], ["Рубрики", 50, -0.15], ["Метки", 38, -0.07]];
const lower = [
  ["media", "Медиафайлы", 84, 0], ["page", "Страницы", 64, 0], ["comments", "Комментарии", 88, 0],
  ["appearance", "Внешний вид", 86, 11], ["plugins", "Плагины", 56, 0], ["users", "Пользователи", 90, 0],
  ["tools", "Инструменты", 86, 0], ["settings", "Настройки", 69, 0],
];
const panels = [["Постоянная ссылка", 119], ["Рубрики", 52], ["Метки", 39], ["Изображение записи", 131]];

function Sidebar() {
  return (
    <SideMenu>
      <SideItem><Dash name="dashboard" /><SideText $gap={8} $w={54}>Консоль</SideText></SideItem>
      <SideItem $current $mt={11}><Dash name="post" /><SideText $gap={8} $w={46}>Записи</SideText></SideItem>
      <SubMenu>
        {subItems.map(([t, w, ls], i) => <SubItem key={t} $w={w} $ls={ls} $on={i === 0}>{t}</SubItem>)}
      </SubMenu>
      {lower.map(([icon, t, w, mt]) => (
        <SideItem key={t} $mt={mt}><Dash name={icon} /><SideText $gap={8} $w={w} $ls={-0.05}>{t}</SideText></SideItem>
      ))}
    </SideMenu>
  );
}

function DocumentPanel() {
  return (
    <Inspector>
      <InspectorTabs>
        <InspectorTab $on><PanelText $strong $w={61} $lh={51}>Документ</PanelText></InspectorTab>
        <InspectorTab><PanelText $w={29} $lh={51}>Блок</PanelText></InspectorTab>
        <InspectorClose><Dash name="close" /></InspectorClose>
      </InspectorTabs>
      <StatusPanel>
        <PanelHead $h={49}><PanelText $strong $w={120} $ls={-0.08} $drop={2}>Статус и видимость</PanelText><MdKeyboardArrowUp size={22} /></PanelHead>
        <PanelRow $h={25}><PanelText $w={65} $ls={-0.28} $c="#555d66">Видимость</PanelText><PanelText $w={52} $c="#0073aa" $link $lh={18}>Открыто</PanelText></PanelRow>
        <PanelRow $h={51}><PanelText $w={86} $ls={-0.08} $c="#555d66">Опубликовать</PanelText><PanelText $w={96} $ls={-0.2} $c="#0073aa" $link $lh={18}>17.12.2018 10:41</PanelText></PanelRow>
        <StickyRow><Checkbox /><PanelText $w={190} $ls={-0.14} $c="#555d66">Закрепить на главной странице</PanelText></StickyRow>
        <TrashButton><PanelText $w={140} $ls={-0.12} $c="#b52727" $lh={29}>Переместить в корзину</PanelText></TrashButton>
      </StatusPanel>
      {panels.map(([t, w]) => (
        <PanelHead key={t} $h={48} $line><PanelText $strong $w={w} $ls={-0.08} $drop={3}>{t}</PanelText><MdKeyboardArrowDown size={22} /></PanelHead>
      ))}
    </Inspector>
  );
}

function BlockEditor() {
  return (
    <Editor>
      <EditorToolbar>
        <ToolIcon><Dash name="insert" /></ToolIcon>
        <ToolIcon $off><Dash name="undo" /></ToolIcon>
        <ToolIcon $off><Dash name="redo" /></ToolIcon>
        <ToolIcon $off><Dash name="info" /></ToolIcon>
        <ToolIcon><ListIcon /></ToolIcon>
        <DraftLink $gap={132} $w={173} $ls={-0.1}>Переключиться на черновик</DraftLink>
        <Button $w={115}><ButtonText $w={89} $ls={-0.08}>Предпросмотр</ButtonText></Button>
        <Button $w={85} $primary><ButtonText $primary $w={58} $ls={-0.15}>Обновить</ButtonText></Button>
        <GearButton><Dash name="gear" /></GearButton>
        <IconSlot $gap={9}><svg width="4" height="20" viewBox="0 0 4 20" fill="#555d66"><circle cx="2" cy="3" r="2" /><circle cx="2" cy="10" r="2" /><circle cx="2" cy="17" r="2" /></svg></IconSlot>
      </EditorToolbar>
      <Workspace>
        <Canvas>
          <TitleRule />
          <PostTitle>ready</PostTitle>
          <Prompt>
            <PromptText>{"Начните писать или\nнажмите / для выбора\nблока"}</PromptText>
            <BlockHints><ImageIcon /><MdTitle size={24} /><GalleryIcon /></BlockHints>
          </Prompt>
        </Canvas>
        <DocumentPanel />
        <ScrollTrack><ScrollArrow /><ScrollThumb $h={313} /><ScrollArrow $down /></ScrollTrack>
      </Workspace>
    </Editor>
  );
}

function BrowserWindow() {
  return (
    <Browser>
      <TabStrip>
        <Tab $w={226} $pad={1}><FileIcon /><TabTitle $gap={10} $w={174} $ls={-0.5} $fade>site1.com / localhost | phpMyAdmin</TabTitle><TabClose $ml={7} size={14} color="#5f6368" /></Tab>
        <TabDivider />
        <Tab $w={238} $pad={14}><FileIcon /><TabTitle $gap={9} $w={91} $ls={-0.4}>ready — site2.com</TabTitle><TabClose $ml={90} size={14} color="#5f6368" /></Tab>
        <Tab $w={240} $pad={14} $active><FileIcon /><TabTitle $active $gap={10} $w={176} $ls={-0.36} $fade>Редактировать запись ‹ site2.com -</TabTitle><TabClose $ml={5} size={14} color="#5f6368" /></Tab>
        <NewTab size={18} color="#5f6368" />
        <GuestCaption>
          <CaptionButton $flat $w={25}><svg width="13" height="6" viewBox="0 0 13 6"><rect x=".5" y="1.500" width="11" height="4" rx="1.500" fill="#fff" stroke="#55585c" /></svg></CaptionButton>
          <CaptionButton $flat $w={25}><svg width="13" height="11" viewBox="0 0 13 11"><rect x=".5" y=".5" width="11" height="9" rx="1.500" fill="#fff" stroke="#55585c" /><rect x="3.500" y="3.500" width="5" height="3" fill="#fff" stroke="#55585c" /></svg></CaptionButton>
          <CaptionButton $flat $w={42}><CloseGlyph edge="#55585c" /></CaptionButton>
        </GuestCaption>
      </TabStrip>
      <AddressBar>
        <NavIcon><MdArrowBack size={19} /></NavIcon>
        <NavIcon $off><MdArrowForward size={19} /></NavIcon>
        <NavIcon><MdRefresh size={20} /></NavIcon>
        <Omnibox>
          <MdInfoOutline size={18} />
          <OmniText $gap={7} $w={88} $ls={-0.2} $c="#5f6368">Не защищено</OmniText>
          <OmniDivider />
          <OmniText $w={59} $ls={-0.15} $c="#202124">site2.com</OmniText>
          <OmniText $w={257} $c="#80868b">/wp-admin/post.php?post=5&action=edit</OmniText>
          <IconSlot $gap={330}><MdStarBorder size={18} /></IconSlot>
        </Omnibox>
        <IconSlot $gap={11}><MdAccountCircle size={21} /></IconSlot>
        <IconSlot $gap={12}><MdMoreVert size={20} /></IconSlot>
      </AddressBar>
      <Viewport>
        <Page>
          <AdminBar>
            <FaWordpress size={20} />
            <IconSlot $gap={15}><Dash name="home" /></IconSlot>
            <BarText $gap={6} $w={54} $ls={-0.28}>site2.com</BarText>
            <IconSlot $gap={15}><Dash name="comments" /></IconSlot>
            <BarText $gap={6} $w={8} $c="#9a9fa4">0</BarText>
            <IconSlot $gap={15}><Dash name="plus" /></IconSlot>
            <BarText $gap={6} $w={57} $ls={-0.12}>Добавить</BarText>
            <BarText $gap={15} $w={122} $ls={-0.15}>Просмотреть запись</BarText>
            <BarText $gap={468} $w={74} $ls={-0.18}>Привет, user</BarText>
            <Avatar><AvatarArt /></Avatar>
          </AdminBar>
          <Columns>
            <Sidebar />
            <BlockEditor />
          </Columns>
        </Page>
        <ScrollTrack><ScrollArrow /><ScrollThumb $h={438} /><ScrollArrow $down /></ScrollTrack>
      </Viewport>
    </Browser>
  );
}

function GuestBar() {
  return (
    <GuestTaskbar>
      <StartButton><WinFlag size={17} /><StartText $w={29}>Start</StartText></StartButton>
      <Launchers><FolderIcon /><IeIcon /><OperaIcon /><FirefoxIcon /></Launchers>
      <TaskButton $gap={12} $pressed><ChromeIcon /></TaskButton>
      <TaskButton $gap={2}><FloppyIcon /></TaskButton>
      <LangText $gap={407} $w={15}>EN</LangText>
      <TraySeparator />
      <GuestTray>
        <svg width="8" height="10" viewBox="0 0 8 10" fill="none" stroke="#000" strokeWidth="1.600"><path d="M1 4.500L4 1.500l3 3M1 8.500l3-3 3 3" /></svg>
        <TrayIcons><PlugIcon edge="#555" /><Speaker edge="#555" wave="#777" /><NetIcon /><RocketIcon /><FlagIcon /></TrayIcons>
        <IconSlot $gap={12} $w={60}><Clock><ClockText $w={28} $ls={-0.1}>10:48</ClockText><ClockText $w={55} $ls={-0.17}>17.12.2018</ClockText></Clock></IconSlot>
        <IconSlot $gap={4} $w={18}><MiniDesktop /></IconSlot>
      </GuestTray>
    </GuestTaskbar>
  );
}

function HostBar() {
  return (
    <HostTaskbar>
      <Wallpaper width="1366" height="40" viewBox="0 0 1366 40" fill="none">
        <defs><filter id="glow"><feGaussianBlur stdDeviation="2.500" /></filter></defs>
        <path d="M880 -8Q950 5 985 48" stroke="#a5cdf5" strokeWidth="8" opacity=".8" filter="url(#glow)" />
        <path d="M60 10L110 -8M100 45L140 -5M420 -5Q450 15 455 45M500 45Q620 5 800 -5" stroke="#8fd0ee" strokeWidth="4" opacity=".25" filter="url(#glow)" />
      </Wallpaper>
      <Orb><OrbIcon /></Orb>
      <IconSlot $gap={26} $w={33}><FolderIcon /></IconSlot>
      <HostApp $gap={16} $w={60}><ChromeIcon /></HostApp>
      <HostApp $gap={2} $w={59} $alert><ClapperIcon /></HostApp>
      <HostApp $gap={2} $w={56}><VboxIcon /></HostApp>
      <StackEdge />
      <HostTray>
        <HostLang $w={15}>EN</HostLang>
        <IconSlot $gap={15} $w={10}><svg width="8" height="5" viewBox="0 0 8 5"><path d="M4 0l4 4.500H0z" fill="#fff" /></svg></IconSlot>
        <IconSlot $gap={11} $w={16}><PlugIcon edge="#0c2444" /></IconSlot>
        <IconSlot $gap={10} $w={15}><SignalIcon /></IconSlot>
        <IconSlot $gap={8} $w={16}><Speaker edge="#0c2444" /></IconSlot>
        <IconSlot $gap={15} $w={60}><Clock><HostText $w={28} $ls={-0.28}>10:48</HostText><HostText $w={55} $ls={-0.38}>17.12.2018</HostText></Clock></IconSlot>
      </HostTray>
      <ShowDesktop />
    </HostTaskbar>
  );
}

export default function App() {
  return (
    <Desktop>
      <Globals />
      <Wallpaper width="1366" height="768" viewBox="0 0 1366 768" fill="none">
        <defs>
          <filter id="soft" x="-20%" y="-30%" width="140%" height="160%"><feGaussianBlur stdDeviation="6" /></filter>
          <linearGradient id="ray"><stop offset="0" stopColor="#45a6f5" /><stop offset="1" stopColor="#45a6f5" stopOpacity="0" /></linearGradient>
        </defs>
        <path d="M1240 62Q1280 32 1332 0" stroke="#5a9ad0" strokeWidth="1.500" opacity=".6" />
        <path d="M1030 250Q1080 228 1130 200" stroke="#4a9fee" opacity=".25" />
        <path d="M1030 646Q1120 625 1260 560Q1130 630 1030 664z" fill="url(#ray)" opacity=".4" filter="url(#soft)" />
      </Wallpaper>
      <VmWindow>
        <TitleBar>
          <VmIcon />
          <TitleText $gap={4} $w={277} $ls={-0.17}>WebFE (bezCMS) [Работает] - Oracle VM VirtualBox</TitleText>
          <CaptionButtons>
            <CaptionButton $w={28}><svg width="13" height="6" viewBox="0 0 13 6"><rect x=".5" y="1.500" width="11" height="3.500" fill="#fff" stroke="#44546e" /></svg></CaptionButton>
            <CaptionButton $w={27}><svg width="13" height="11" viewBox="0 0 13 11"><path fillRule="evenodd" d="M.5.500h11.500v9.500H.5zM4 4v2.500h4.500V4z" fill="#fff" stroke="#44546e" /></svg></CaptionButton>
            <CaptionButton $w={47}><CloseGlyph edge="#44546e" /></CaptionButton>
          </CaptionButtons>
        </TitleBar>
        <WindowBody>
          <Client>
            <MenuBar>{menu.map(([t, w, g, ls]) => <MenuItem key={t} $w={w} $gap={g} $ls={ls}>{t}</MenuItem>)}</MenuBar>
            <Guest>
              <BrowserWindow />
              <GuestBar />
            </Guest>
            <StatusBar>
              <StatusIcons />
              <StatusText $w={46} $ls={-0.08}>Right Ctrl</StatusText>
              <Grip width="13" height="13" viewBox="0 0 13 13" stroke="#9a9a9a"><path d="M0 13L13 0M4 13l9-9M8 13l5-5" /></Grip>
            </StatusBar>
          </Client>
          <RightFrame />
        </WindowBody>
        <BottomFrame />
      </VmWindow>
      <HostBar />
    </Desktop>
  );
}
